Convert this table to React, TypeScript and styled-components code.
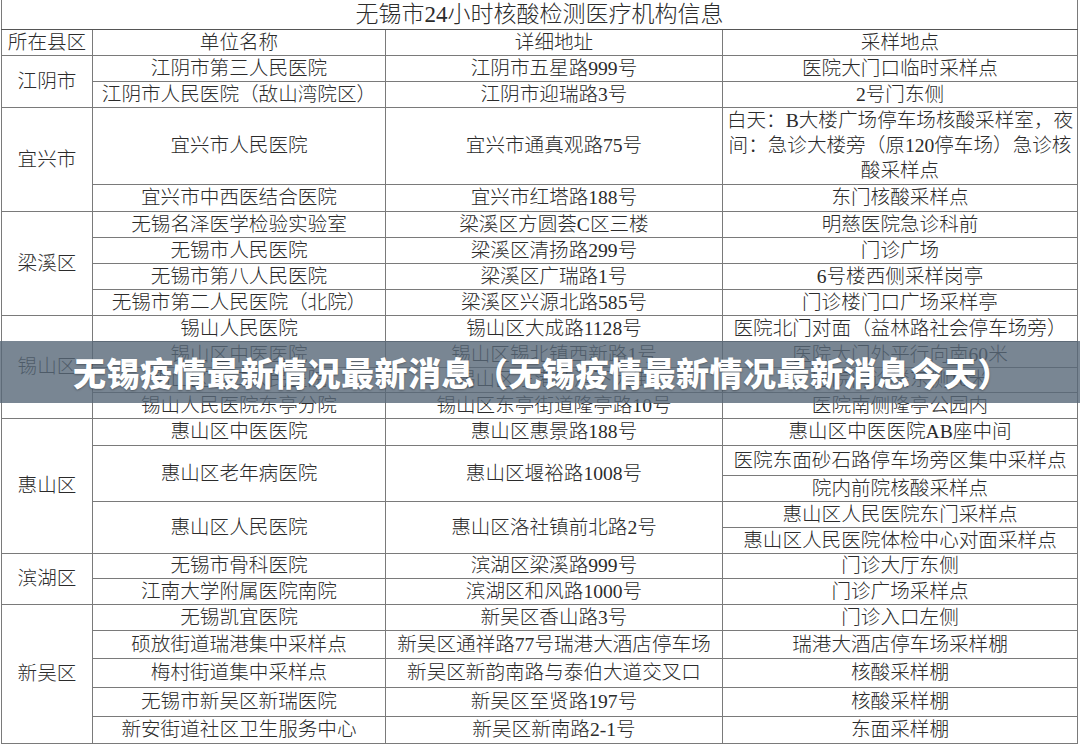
import styled, { createGlobalStyle } from "styled-components";

const GlobalStyle = createGlobalStyle`
  html, body {
    margin: 0;
    padding: 0;
    background: #ffffff;
  }
`;

const App = () => {
  return (
    <Page>
      <GlobalStyle />
      <Sheet>
        <colgroup>
          <col style={{ width: 91 }} />
          <col style={{ width: 293 }} />
          <col style={{ width: 337 }} />
          <col style={{ width: 355 }} />
        </colgroup>
        <tbody>
          <Row $h={29}>
            <TitleCell colSpan={4}>无锡市24小时核酸检测医疗机构信息</TitleCell>
          </Row>
          <Row $h={26}>
            <Cell>所在县区</Cell>
            <Cell>单位名称</Cell>
            <Cell>详细地址</Cell>
            <Cell>采样地点</Cell>
          </Row>

          {/* 江阴市 */}
          <Row $h={26}>
            <Cell rowSpan={2}>江阴市</Cell>
            <Cell>江阴市第三人民医院</Cell>
            <Cell>江阴市五星路999号</Cell>
            <Cell>医院大门口临时采样点</Cell>
          </Row>
          <Row $h={26}>
            <Cell>江阴市人民医院（敌山湾院区）</Cell>
            <Cell>江阴市迎瑞路3号</Cell>
            <Cell>2号门东侧</Cell>
          </Row>

          {/* 宜兴市 */}
          <Row $h={77}>
            <Cell rowSpan={2}>宜兴市</Cell>
            <Cell>宜兴市人民医院</Cell>
            <Cell>宜兴市通真观路75号</Cell>
            <Cell $multi>
              白天：B大楼广场停车场核酸采样室，夜
              <br />
              间：急诊大楼旁（原120停车场）急诊核
              <br />
              酸采样点
            </Cell>
          </Row>
          <Row $h={27}>
            <Cell>宜兴市中西医结合医院</Cell>
            <Cell>宜兴市红塔路188号</Cell>
            <Cell>东门核酸采样点</Cell>
          </Row>

          {/* 梁溪区 */}
          <Row $h={26}>
            <Cell rowSpan={4}>梁溪区</Cell>
            <Cell>无锡名泽医学检验实验室</Cell>
            <Cell>梁溪区方圆荟C区三楼</Cell>
            <Cell>明慈医院急诊科前</Cell>
          </Row>
          <Row $h={26}>
            <Cell>无锡市人民医院</Cell>
            <Cell>梁溪区清扬路299号</Cell>
            <Cell>门诊广场</Cell>
          </Row>
          <Row $h={26}>
            <Cell>无锡市第八人民医院</Cell>
            <Cell>梁溪区广瑞路1号</Cell>
            <Cell>6号楼西侧采样岗亭</Cell>
          </Row>
          <Row $h={26}>
            <Cell>无锡市第二人民医院（北院）</Cell>
            <Cell>梁溪区兴源北路585号</Cell>
            <Cell>门诊楼门口广场采样亭</Cell>
          </Row>

          {/* 锡山区 */}
          <Row $h={26}>
            <Cell rowSpan={4}>锡山区</Cell>
            <Cell>锡山人民医院</Cell>
            <Cell>锡山区大成路1128号</Cell>
            <Cell>医院北门对面（益林路社会停车场旁）</Cell>
          </Row>
          <Row $h={26}>
            <Cell>锡山区中医医院</Cell>
            <Cell>锡山区锡北镇西新路1号</Cell>
            <Cell>医院大门外平行向南60米</Cell>
          </Row>
          <Row $h={25}>
            <Cell>锡山区第二人民医院</Cell>
            <Cell>锡山区东港镇港下大街</Cell>
            <Cell>医院门诊楼东侧10米</Cell>
          </Row>
          <Row $h={26}>
            <Cell>锡山人民医院东亭分院</Cell>
            <Cell>锡山区东亭街道隆亭路10号</Cell>
            <Cell>医院南侧隆亭公园内</Cell>
          </Row>

          {/* 惠山区 */}
          <Row $h={27}>
            <Cell rowSpan={5}>惠山区</Cell>
            <Cell>惠山区中医医院</Cell>
            <Cell>惠山区惠景路188号</Cell>
            <Cell>惠山区中医医院AB座中间</Cell>
          </Row>
          <Row $h={30}>
            <Cell rowSpan={2}>惠山区老年病医院</Cell>
            <Cell rowSpan={2}>惠山区堰裕路1008号</Cell>
            <Cell>医院东面砂石路停车场旁区集中采样点</Cell>
          </Row>
          <Row $h={26}>
            <Cell>院内前院核酸采样点</Cell>
          </Row>
          <Row $h={26}>
            <Cell rowSpan={2}>惠山区人民医院</Cell>
            <Cell rowSpan={2}>惠山区洛社镇前北路2号</Cell>
            <Cell>惠山区人民医院东门采样点</Cell>
          </Row>
          <Row $h={26}>
            <Cell>惠山区人民医院体检中心对面采样点</Cell>
          </Row>

          {/* 滨湖区 */}
          <Row $h={25}>
            <Cell rowSpan={2}>滨湖区</Cell>
            <Cell>无锡市骨科医院</Cell>
            <Cell>滨湖区梁溪路999号</Cell>
            <Cell>门诊大厅东侧</Cell>
          </Row>
          <Row $h={26}>
            <Cell>江南大学附属医院南院</Cell>
            <Cell>滨湖区和风路1000号</Cell>
            <Cell>门诊广场采样点</Cell>
          </Row>

          {/* 新吴区 */}
          <Row $h={26}>
            <Cell rowSpan={5}>新吴区</Cell>
            <Cell>无锡凯宜医院</Cell>
            <Cell>新吴区香山路3号</Cell>
            <Cell>门诊入口左侧</Cell>
          </Row>
          <Row $h={28}>
            <Cell>硕放街道瑞港集中采样点</Cell>
            <Cell>新吴区通祥路77号瑞港大酒店停车场</Cell>
            <Cell>瑞港大酒店停车场采样棚</Cell>
          </Row>
          <Row $h={29}>
            <Cell>梅村街道集中采样点</Cell>
            <Cell>新吴区新韵南路与泰伯大道交叉口</Cell>
            <Cell>核酸采样棚</Cell>
          </Row>
          <Row $h={29}>
            <Cell>无锡市新吴区新瑞医院</Cell>
            <Cell>新吴区至贤路197号</Cell>
            <Cell>核酸采样棚</Cell>
          </Row>
          <Row $h={27}>
            <Cell>新安街道社区卫生服务中心</Cell>
            <Cell>新吴区新南路2-1号</Cell>
            <Cell>东面采样棚</Cell>
          </Row>
        </tbody>
      </Sheet>

      <Banner>
        <BannerText>
          无锡疫情最新情况最新消息（无锡疫情最新情况最新消息今天）
        </BannerText>
      </Banner>
    </Page>
  );
};

const Page = styled.div`
  position: relative;
  width: 1080px;
  height: 744px;
  overflow: hidden;
  background: #ffffff;
`;

const Sheet = styled.table`
  margin-left: 1px;
  width: 1077px;
  border-collapse: collapse;
  table-layout: fixed;
  font-family: "Liberation Serif", "Noto Sans CJK SC", serif;
  color: #2b2b2b;
`;

const Row = styled.tr<{ $h: number }>`
  height: ${(p) => p.$h}px;
`;

const Cell = styled.td<{ $multi?: boolean }>`
  border: 1px solid #7a7a7a;
  padding: 0;
  text-align: center;
  vertical-align: middle;
  white-space: nowrap;
  font-size: 19.6px;
  font-weight: 300;
  line-height: ${(p) => (p.$multi ? "25px" : "23px")};
  overflow: hidden;
`;

const TitleCell = styled(Cell)`
  border-top: none;
  border-bottom-color: #555;
  font-size: 23px;
  line-height: 27px;
`;

const Banner = styled.div`
  position: absolute;
  top: 341px;
  left: 0;
  right: 0;
  height: 62px;
  background: rgba(88, 104, 120, 0.8);
  display: flex;
  align-items: center;
  justify-content: center;
`;

const BannerText = styled.div`
  font-family: "Noto Sans CJK SC", "Noto Sans", sans-serif;
  font-size: 33px;
  font-weight: 900;
  letter-spacing: 0.5px;
  color: #ffffff;
  white-space: nowrap;
  text-shadow: 0 1px 2px rgba(0, 0, 0, 0.35);
  padding-left: 4px;
`;

export default App;
